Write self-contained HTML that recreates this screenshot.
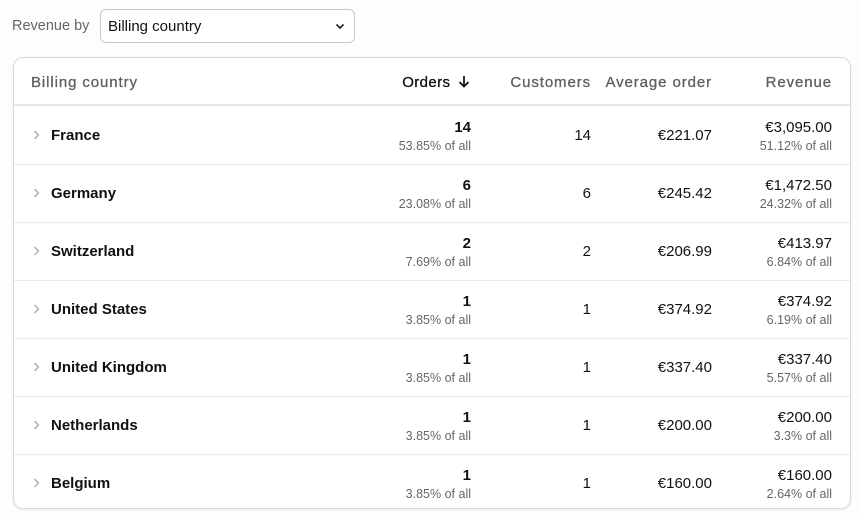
<!DOCTYPE html>
<html><head><meta charset="utf-8"><style>
*{box-sizing:border-box;margin:0;padding:0}
body{width:860px;height:518px;background:#fdfdfc;font-family:"Liberation Sans",sans-serif;color:#111;position:relative;overflow:hidden}
.lbl{position:absolute;left:12px;top:18px;font-size:14.5px;color:#666}
.sel{position:absolute;left:100px;top:9px;width:255px;height:34px;border:1px solid #c9c9c9;border-radius:6px;background:#fff;font-size:15px;padding:8px 0 0 7px;color:#111}
.sel svg{position:absolute;right:9px;top:13px}
.card{position:absolute;left:13px;top:57px;width:838px;height:452px;border:1px solid #d8d8d8;border-radius:10px;background:#fff;overflow:hidden;box-shadow:0 1px 2px rgba(0,0,0,.08)}
.hdr{position:absolute;left:0;top:0;width:100%;height:48px;border-bottom:2px solid #e6e6e6}
.h{position:absolute;top:16px;font-size:15px;color:#5f5f5f;letter-spacing:.9px;white-space:nowrap;-webkit-text-stroke:.3px #5f5f5f}
.row{position:absolute;left:0;width:100%;height:58px;border-bottom:1px solid #ececec}
.c{position:absolute;white-space:nowrap;text-align:right}
.name{position:absolute;left:37px;top:20px;font-size:15px;font-weight:bold}
.chev{position:absolute;left:19px;top:23px}
.big{font-size:15px}
.sub{font-size:12.5px;color:#666;margin-top:3px}
</style></head><body>
<div class="lbl">Revenue by</div>
<div class="sel">Billing country<svg width="10" height="7" viewBox="0 0 10 7"><path d="M1.5 1.5L5 5 8.5 1.5" fill="none" stroke="#222" stroke-width="1.6"/></svg></div>
<div class="card">
<div class="hdr">
<div class="h" style="left:17px">Billing country</div>
<div class="h" style="right:380px;color:#111;-webkit-text-stroke:.3px #111;letter-spacing:.4px">Orders <svg width="12" height="13" viewBox="0 0 12 13" style="vertical-align:-1px;margin-left:3px"><path d="M6 1v10M1.5 7L6 11.5 10.5 7" fill="none" stroke="#111" stroke-width="1.7"/></svg></div>
<div class="h" style="right:259px">Customers</div>
<div class="h" style="right:138px">Average order</div>
<div class="h" style="right:18px">Revenue</div>
</div>
<div id="rows"></div>
</div>
<script>
var d=[["France","14","53.85%","14","€221.07","€3,095.00","51.12%"],["Germany","6","23.08%","6","€245.42","€1,472.50","24.32%"],["Switzerland","2","7.69%","2","€206.99","€413.97","6.84%"],["United States","1","3.85%","1","€374.92","€374.92","6.19%"],["United Kingdom","1","3.85%","1","€337.40","€337.40","5.57%"],["Netherlands","1","3.85%","1","€200.00","€200.00","3.3%"],["Belgium","1","3.85%","1","€160.00","€160.00","2.64%"]];
var h="";d.forEach(function(r,i){h+='<div class="row" style="top:'+(49+i*58)+'px"><svg class="chev" width="7" height="10" viewBox="0 0 7 10"><path d="M1.5 1L5.5 5 1.5 9" fill="none" stroke="#aaa" stroke-width="1.3"/></svg><div class="name">'+r[0]+'</div>'+
'<div class="c" style="right:379px;top:12px"><div class="big" style="font-weight:bold">'+r[1]+'</div><div class="sub">'+r[2]+' of all</div></div>'+
'<div class="c big" style="right:259px;top:20px">'+r[3]+'</div>'+
'<div class="c big" style="right:138px;top:20px">'+r[4]+'</div>'+
'<div class="c" style="right:18px;top:12px"><div class="big">'+r[5]+'</div><div class="sub">'+r[6]+' of all</div></div></div>';});
document.getElementById("rows").innerHTML=h;
</script>
</body></html>
